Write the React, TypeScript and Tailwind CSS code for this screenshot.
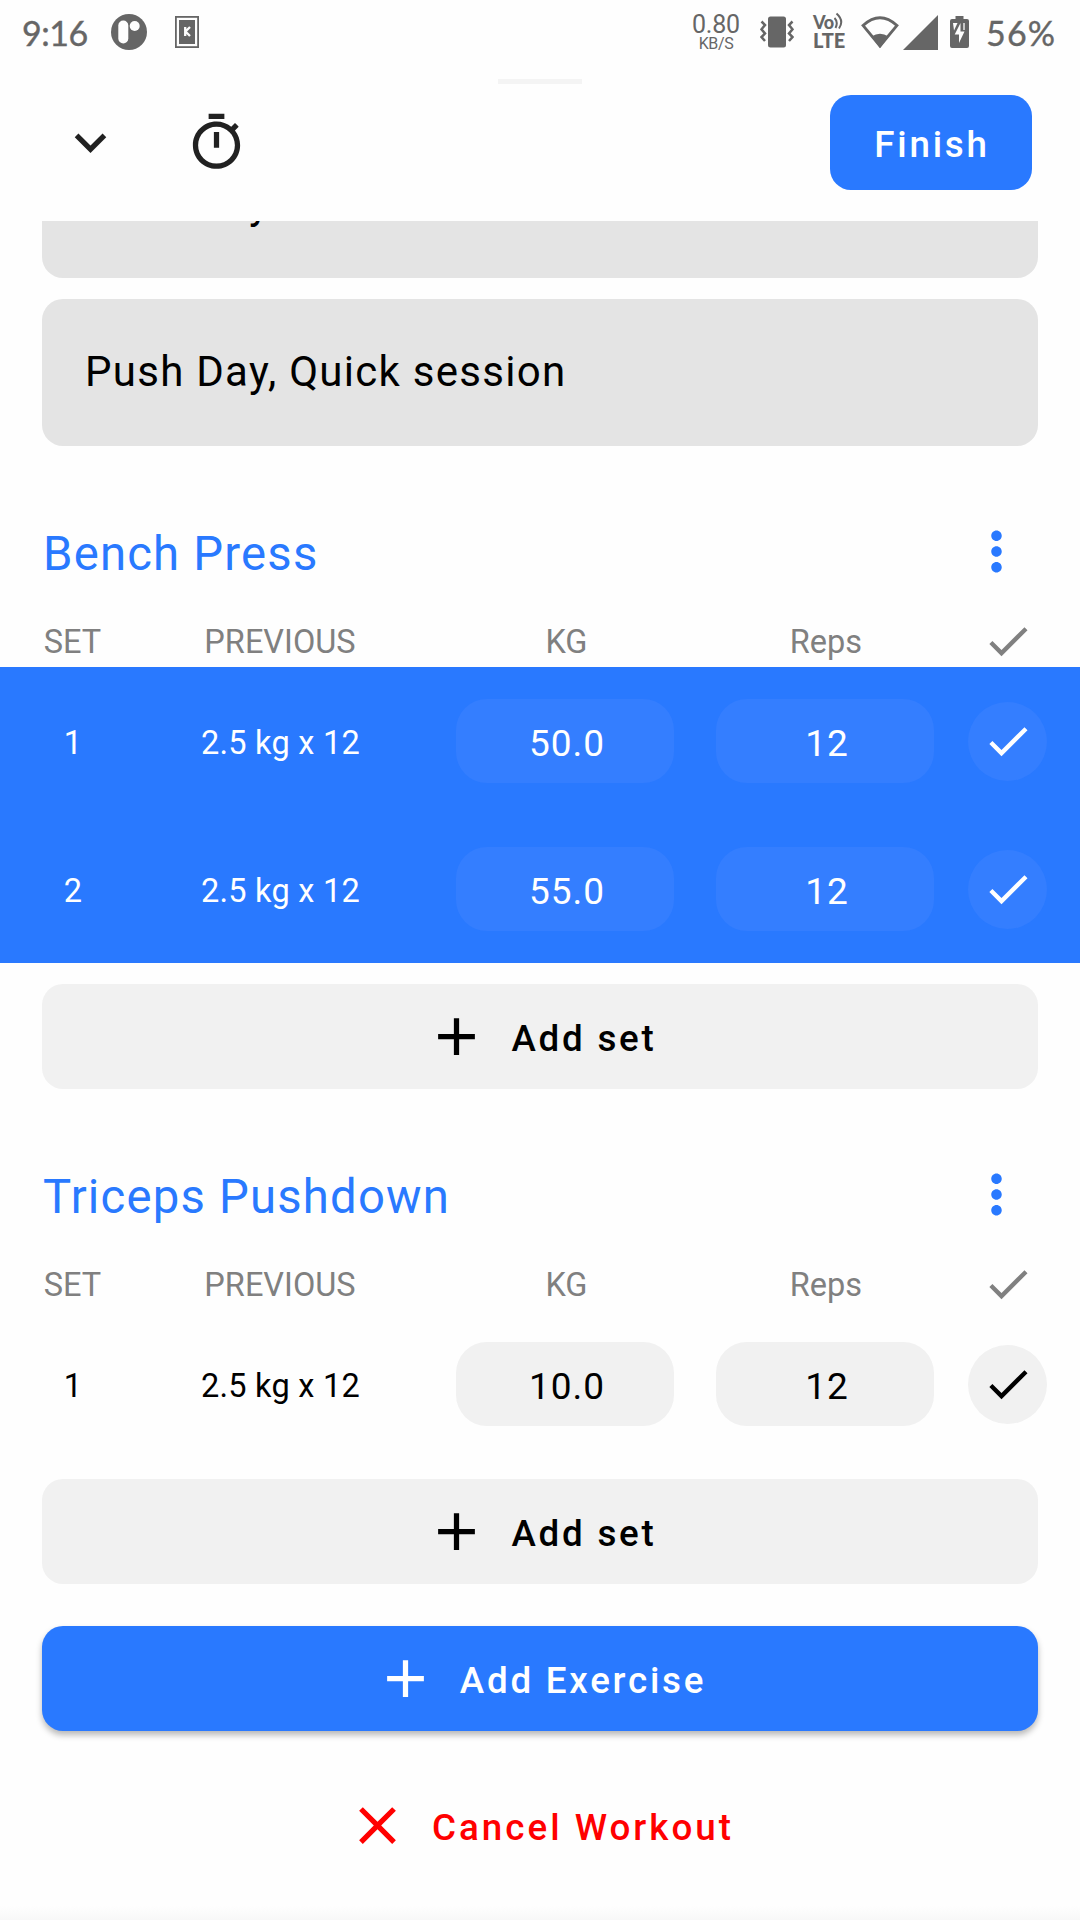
import React from "react";

type SetData = { n: string; prev: string; kg: string; reps: string; done: boolean };

const PLUS = "M19 13h-6v6h-2v-6H5v-2h6V5h2v6h6z";
const CLOSE =
  "M19 6.41 17.59 5 12 10.59 6.41 5 5 6.41 10.59 12 5 17.59 6.41 19 12 13.41 17.59 19 19 17.59 13.41 12z";
const DONE = "M9 16.2 4.8 12l-1.4 1.4L9 19 21 7l-1.4-1.4z";
const MORE =
  "M12 8c1.1 0 2-.9 2-2s-.9-2-2-2-2 .9-2 2 .9 2 2 2zm0 2c-1.1 0-2 .9-2 2s.9 2 2 2 2-.9 2-2-.9-2-2-2zm0 6c-1.1 0-2 .9-2 2s.9 2 2 2 2-.9 2-2-.9-2-2-2z";
const CHEVRON = "M16.59 8.59 12 13.17 7.41 8.59 6 10l6 6 6-6z";
const TIMER =
  "M15 1H9v2h6V1zm-4 13h2V8h-2v6zm8.03-6.61 1.42-1.42c-.43-.51-.9-.99-1.41-1.41l-1.42 1.42C16.07 4.74 14.12 4 12 4c-4.97 0-9 4.03-9 9s4.02 9 9 9 9-4.03 9-9c0-2.12-.74-4.07-1.97-5.61zM12 20c-3.87 0-7-3.13-7-7s3.13-7 7-7 7 3.13 7 7-3.13 7-7 7z";

function Icon({ d, className = "size-[63px]" }: { d: string; className?: string }) {
  return (
    <svg viewBox="0 0 24 24" fill="currentColor" className={`shrink-0 ${className}`}>
      <path d={d} />
    </svg>
  );
}

function StatusBar() {
  return (
    <div className="flex h-[64px] shrink-0 items-center text-[#666666]">
      <span className="ml-[22px] w-[89px] pt-px font-[Lato,sans-serif] text-[34px] leading-none tracking-[-0.5px] [-webkit-text-stroke:0.4px_#666666]">
        9:16
      </span>
      <svg viewBox="0 0 36 36" className="size-9 shrink-0">
        <circle cx="18" cy="18" r="18" fill="currentColor" />
        <rect x="7.3" y="6.5" width="10" height="23" rx="5" fill="#fefefe" />
        <circle cx="23.7" cy="12" r="5" fill="#fefefe" />
      </svg>
      <svg viewBox="0 0 24 32" className="ml-7 h-8 w-6 shrink-0">
        <rect x="0.9" y="0.9" width="22.2" height="30.2" fill="none" stroke="currentColor" strokeWidth="1.8" />
        <rect x="4" y="4" width="16" height="24" fill="currentColor" />
        <path d="M10.2 11v9M15 11l-4.500 4.500L15 20" fill="none" stroke="#fefefe" strokeWidth="2.3" />
      </svg>
      <div className="ml-auto flex w-[390px] items-center">
        <div className="flex w-[52px] shrink-0 flex-col items-center font-[Roboto,sans-serif]">
          <span className="text-[25px] leading-[21px] tracking-[-0.2px]">0.80</span>
          <span className="pt-px text-[16px] leading-[15px] tracking-[-0.4px]">KB/S</span>
        </div>
        <svg viewBox="0 0 34 32" className="ml-[18px] h-8 w-[34px] shrink-0">
          <rect x="8" y="0.5" width="18" height="31" rx="2.5" fill="currentColor" />
          <path
            d="M1.500 5.500 5 9l-3.500 4.300L5 17.500 1.500 21l3.500 4M32.500 5.500 29 9l3.500 4.300-3.500 4.200 3.500 3.500-3.500 4"
            fill="none"
            stroke="currentColor"
            strokeWidth="2.5"
          />
        </svg>
        <div className="ml-[19px] flex h-[36px] w-[32px] shrink-0 flex-col font-[Lato,sans-serif] font-black">
          <span className="flex h-[17px] items-center">
            <span className="text-[18px] leading-[17px] tracking-[-0.5px]">Vo</span>
            <svg viewBox="0 0 10 18" className="mb-1 h-[18px] w-[10px] shrink-0">
              <path d="M0.500 6q4 4 1 10M2.500 1.500q8 7 2.500 15" fill="none" stroke="currentColor" strokeWidth="2" />
            </svg>
          </span>
          <span className="text-[20px] leading-[19px]">LTE</span>
        </div>
        <svg viewBox="0 0 38 33" className="ml-4 h-[33px] w-[38px] shrink-0">
          <path d="M2 9.500Q19-6 36 9.500L19 30z" fill="none" stroke="currentColor" strokeWidth="2.8" />
          <path d="M10.500 20.500Q19 15 27.500 20.500L19 32z" fill="currentColor" />
        </svg>
        <svg viewBox="0 0 35 35" className="ml-1 size-[35px] shrink-0">
          <path d="M35 0v35H0z" fill="currentColor" />
        </svg>
        <svg viewBox="0 0 19 32" className="ml-3 h-8 w-[19px] shrink-0">
          <path d="M5.500 0h8v3H17q2 0 2 2v25q0 2-2 2H2q-2 0-2-2V5q0-2 2-2h3.500z" fill="currentColor" />
          <path d="M3 7h4.500L4 14.500z" fill="#fefefe" />
          <path d="M10.500 7v8.500h4L9 27v-8.500H4.700z" fill="#fefefe" />
          <path d="M14 7v7" stroke="#fefefe" strokeWidth="1.3" />
        </svg>
        <span className="ml-[17px] pt-px font-[Lato,sans-serif] text-[34px] leading-none tracking-[1.2px] [-webkit-text-stroke:0.4px_#666666]">
          56%
        </span>
      </div>
    </div>
  );
}

function NoteCard({ children }: { children: string }) {
  return (
    <div className="mx-[42px] flex h-[147px] shrink-0 items-center rounded-[21px] bg-[#e4e4e4] pr-[42px] pb-[2px] pl-[43px] text-[42px] tracking-[1.28px] text-black">
      {children}
    </div>
  );
}

const GRID = "grid grid-cols-[61px_353px_218px_260px_155px] items-center pl-[42px]";

function ValuePill({ children, done }: { children: string; done: boolean }) {
  return (
    <div
      className={`flex h-[84px] items-center justify-center rounded-[31px] pt-[5px] pl-1 text-[37px] tracking-[1px] ${
        done ? "bg-[#347eff]" : "bg-[#f1f1f1]"
      }`}
    >
      {children}
    </div>
  );
}

function SetRow({ s }: { s: SetData }) {
  return (
    <div className={`${GRID} h-[148px] ${s.done ? "bg-[#2979ff] text-white" : "text-black"}`}>
      <span className="pt-[5px] pl-px text-center text-[32.5px]">{s.n}</span>
      <span className="pt-[5px] pl-[2px] text-center text-[32.5px] tracking-[0.25px]">{s.prev}</span>
      <ValuePill done={s.done}>{s.kg}</ValuePill>
      <div className="pl-[42px]">
        <ValuePill done={s.done}>{s.reps}</ValuePill>
      </div>
      <div
        className={`ml-[34px] flex size-[79px] items-center justify-center rounded-full ${
          s.done ? "bg-[#347eff]" : "bg-[#f1f1f1]"
        }`}
      >
        <Icon d={DONE} className="size-[52px]" />
      </div>
    </div>
  );
}

function Exercise({ name, sets }: { name: string; sets: SetData[] }) {
  return (
    <section>
      <div className="flex h-[63px] items-center justify-between pr-[52px] pl-[43px] text-[#2979ff]">
        <h2 className="pt-1 text-[47.25px] leading-[56px] tracking-[1.2px]">{name}</h2>
        <Icon d={MORE} />
      </div>
      <div className={`${GRID} mt-[31px] h-[53px] text-[32.5px] text-[#808080]`}>
        <span className="pt-1 text-center">SET</span>
        <span className="pt-1 pl-px text-center">PREVIOUS</span>
        <span className="pt-1 pl-[3px] text-center">KG</span>
        <span className="pt-1 pl-[44px] text-center">Reps</span>
        <span className="ml-[34px] flex w-[79px] justify-center">
          <Icon d={DONE} className="size-[52px]" />
        </span>
      </div>
      {sets.map((s) => (
        <SetRow key={s.n} s={s} />
      ))}
      <button className="mx-[42px] mt-[21px] flex h-[105px] w-[996px] items-center justify-center gap-[23px] rounded-[21px] bg-[#f1f1f1] pl-[2px] text-[36.75px] font-medium tracking-[2.75px] text-black">
        <Icon d={PLUS} />
        <span className="pt-1">Add set</span>
      </button>
    </section>
  );
}

export default function App() {
  return (
    <div className="flex h-[1920px] w-[1080px] flex-col overflow-hidden bg-[#fefefe] font-[Roboto,sans-serif]">
      <StatusBar />
      <header className="flex h-[157px] shrink-0 flex-col">
        <div className="mt-[15px] h-[5px] w-[84px] self-center bg-[#f4f4f4]" />
        <div className="mt-[11px] flex h-[95px] items-center pr-12 pl-[59px] text-[#212121]">
          <Icon d={CHEVRON} />
          <Icon d={TIMER} className="ml-[63px] size-[63px]" />
          <button className="ml-auto h-[95px] w-[202px] rounded-[21px] bg-[#2979ff] pt-1 pl-[2px] text-[36.75px] font-medium tracking-[2.8px] text-white">
            Finish
          </button>
        </div>
      </header>
      <main className="flex min-h-0 flex-1 flex-col overflow-hidden">
        <div className="-mt-[90px] flex flex-col gap-[21px]">
          <NoteCard>Push Day</NoteCard>
          <NoteCard>Push Day, Quick session</NoteCard>
        </div>
        <div className="mt-[74px] flex flex-col gap-[74px]">
          <Exercise
            name="Bench Press"
            sets={[
              { n: "1", prev: "2.5 kg x 12", kg: "50.0", reps: "12", done: true },
              { n: "2", prev: "2.5 kg x 12", kg: "55.0", reps: "12", done: true },
            ]}
          />
          <Exercise
            name="Triceps Pushdown"
            sets={[{ n: "1", prev: "2.5 kg x 12", kg: "10.0", reps: "12", done: false }]}
          />
        </div>
        <button className="mx-[42px] mt-[42px] flex h-[105px] shrink-0 items-center justify-center gap-[23px] rounded-[21px] bg-[#2979ff] text-[36.75px] font-medium tracking-[2.75px] text-white shadow-[0_4px_6px_rgba(0,0,0,0.28)]">
          <Icon d={PLUS} />
          <span className="pt-1">Add Exercise</span>
        </button>
        <button className="mx-[42px] mt-[42px] flex h-[105px] shrink-0 items-center justify-center gap-[23px] text-[36.75px] font-medium tracking-[3px] text-[#ff0000]">
          <Icon d={CLOSE} />
          <span className="pt-1">Cancel Workout</span>
        </button>
        <div className="mt-auto h-[14px] shrink-0 bg-linear-to-b from-[#fefefe] to-[#f8f8f8]" />
      </main>
    </div>
  );
}
